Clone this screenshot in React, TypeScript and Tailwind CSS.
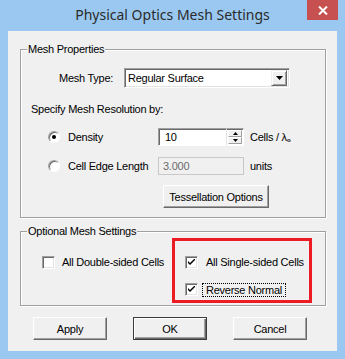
import React from "react";

function Group({ label, className, children }: { label: string; className?: string; children?: React.ReactNode }) {
  return (
    <div className={`relative border border-[#a0a0a0] shadow-[inset_1px_1px_0_#fff,1px_1px_0_#fff] ${className ?? ""}`}>
      <span className="absolute left-[6px] top-[-8px] bg-[#f0f0f0] px-[1px] leading-[14px] whitespace-nowrap">{label}</span>
      {children}
    </div>
  );
}

function Radio({ checked }: { checked?: boolean }) {
  return (
    <div className="w-[12px] h-[12px] shrink-0 rounded-full bg-white border border-t-[#a0a0a0] border-l-[#a0a0a0] border-b-[#ffffff] border-r-[#ffffff] shadow-[inset_1px_1px_0_#696969] flex items-center justify-center">
      {checked && <div className="w-[4px] h-[4px] rounded-full bg-black" />}
    </div>
  );
}

function Check({ checked }: { checked?: boolean }) {
  return (
    <div className="w-[13px] h-[13px] shrink-0 bg-white border border-t-[#a0a0a0] border-l-[#a0a0a0] border-b-[#ffffff] border-r-[#ffffff] shadow-[inset_1px_1px_0_#696969,inset_-1px_-1px_0_#e3e3e3] flex items-center justify-center">
      {checked && (
        <svg width="7" height="7" viewBox="0 0 7 7">
          <path d="M0 2 L0 4 L2 6 L7 1 L7 -1 L2 4 Z" fill="#000" />
        </svg>
      )}
    </div>
  );
}

function Btn({ label, className, def }: { label: string; className?: string; def?: boolean }) {
  return (
    <div
      className={`h-[23px] bg-[#f0f0f0] flex items-center justify-center ${
        def
          ? "border border-[#3c3c3c] shadow-[inset_1px_1px_0_#fff,inset_-1px_-1px_0_#696969,inset_-2px_-2px_0_#a0a0a0]"
          : "border border-t-[#fff] border-l-[#fff] border-b-[#696969] border-r-[#696969] shadow-[inset_-1px_-1px_0_#a0a0a0]"
      } ${className ?? ""}`}
    >
      <span className="leading-[14px]">{label}</span>
    </div>
  );
}

export default function App() {
  return (
    <div className="w-[345px] h-[359px] bg-[#9ac8f0] flex flex-col font-['Liberation_Sans',Arial,sans-serif] text-[11px] text-black tracking-[-0.25px]">
      <div className="relative h-[31px] shrink-0 flex items-start justify-center">
        <span className="mt-[5px] text-[14px] leading-[20px] text-[#2b2b2b] font-['Noto_Sans',sans-serif] tracking-normal">
          Physical Optics Mesh Settings
        </span>
        <div className="absolute left-[307px] top-0 w-[31px] h-[20px] bg-[#c75050] flex items-center justify-center">
          <svg width="10" height="9" viewBox="0 0 10 9">
            <path d="M1 0.5 L9 8.5 M9 0.5 L1 8.5" stroke="#fff" strokeWidth="2" />
          </svg>
        </div>
      </div>

      <div className="mx-[8px] h-[320px] shrink-0 bg-[#f0f0f0] pl-[12px] pt-[18px] flex flex-col">
        <Group label="Mesh Properties" className="w-[306px] h-[169px] shrink-0">
          <div className="flex flex-col">
            <div className="mt-[18px] h-[20px] flex items-center pl-[38px]">
              <span className="w-[65px]">Mesh Type:</span>
              <div className="w-[166px] h-[20px] bg-white border border-t-[#a0a0a0] border-l-[#a0a0a0] border-b-[#ffffff] border-r-[#ffffff] shadow-[inset_1px_1px_0_#696969,inset_-1px_-1px_0_#e3e3e3] flex items-center">
                <span className="pl-[3px] flex-1">Regular Surface</span>
                <div className="w-[16px] h-[16px] mr-[2px] bg-[#f0f0f0] border border-t-[#f0f0f0] border-l-[#f0f0f0] border-b-[#696969] border-r-[#696969] shadow-[inset_1px_1px_0_#fff,inset_-1px_-1px_0_#a0a0a0] flex items-center justify-center">
                  <svg width="7" height="4" viewBox="0 0 7 4">
                    <path d="M0 0 H7 L3.5 4 Z" fill="#000" />
                  </svg>
                </div>
              </div>
            </div>

            <div className="mt-[14px] h-[14px] flex items-center pl-[10px]">
              <span>Specify Mesh Resolution by:</span>
            </div>

            <div className="mt-[12px] h-[18px] flex items-center pl-[27px]">
              <Radio checked />
              <span className="ml-[8px] w-[90px]">Density</span>
              <div className="w-[69px] h-[18px] bg-white border border-t-[#a0a0a0] border-l-[#a0a0a0] border-b-[#ffffff] border-r-[#e3e3e3] shadow-[inset_1px_1px_0_#696969] flex items-center">
                <span className="pl-[6px]">10</span>
              </div>
              <div className="w-[17px] h-[18px] flex flex-col bg-white border-t border-b border-r border-t-[#a0a0a0] border-b-[#fff] border-r-[#fff] shadow-[inset_0_1px_0_#696969] p-[1px]">
                <div className="flex-1 bg-[#f0f0f0] border border-t-[#fff] border-l-[#fff] border-b-[#a0a0a0] border-r-[#a0a0a0] flex items-center justify-center">
                  <svg width="5" height="3" viewBox="0 0 5 3"><path d="M0 3 H5 L2.5 0 Z" fill="#000" /></svg>
                </div>
                <div className="flex-1 bg-[#f0f0f0] border border-t-[#fff] border-l-[#fff] border-b-[#a0a0a0] border-r-[#a0a0a0] flex items-center justify-center">
                  <svg width="5" height="3" viewBox="0 0 5 3"><path d="M0 0 H5 L2.5 3 Z" fill="#000" /></svg>
                </div>
              </div>
              <span className="ml-[6px]">
                Cells / λ<sub className="text-[6px] font-bold">o</sub>
              </span>
            </div>

            <div className="mt-[11px] h-[18px] flex items-center pl-[27px]">
              <Radio />
              <span className="ml-[8px] w-[90px]">Cell Edge Length</span>
              <div className="w-[86px] h-[18px] bg-[#f0f0f0] border border-[#c8c8c8] flex items-center">
                <span className="pl-[4px] text-[#6d6d6d]">3.000</span>
              </div>
              <span className="ml-[6px]">units</span>
            </div>

            <div className="mt-[10px] flex pl-[142px]">
              <Btn label="Tessellation Options" className="w-[106px]" />
            </div>
          </div>
        </Group>

        <Group label="Optional Mesh Settings" className="mt-[13px] w-[306px] h-[75px] shrink-0">
          <div className="flex flex-col">
            <div className="mt-[24px] h-[13px] flex items-center pl-[21px]">
              <div className="w-[143px] flex items-center">
                <Check />
                <span className="ml-[7px] whitespace-nowrap">All Double-sided Cells</span>
              </div>
              <Check checked />
              <span className="ml-[8px] whitespace-nowrap">All Single-sided Cells</span>
            </div>
            <div className="mt-[14px] h-[13px] flex items-center pl-[164px]">
              <Check checked />
              <span className="ml-[4px] border border-dotted border-black px-[3px] leading-[12px] whitespace-nowrap">Reverse Normal</span>
            </div>
          </div>
          <div className="absolute left-[151px] top-[6px] w-[140px] h-[65px] border-[3px] border-[#ed1c24]" />
        </Group>

        <div className="mt-[11px] flex gap-[26px] pl-[13px]">
          <Btn label="Apply" className="w-[74px]" />
          <Btn label="OK" className="w-[74px]" def />
          <Btn label="Cancel" className="w-[74px]" />
        </div>
      </div>
    </div>
  );
}
